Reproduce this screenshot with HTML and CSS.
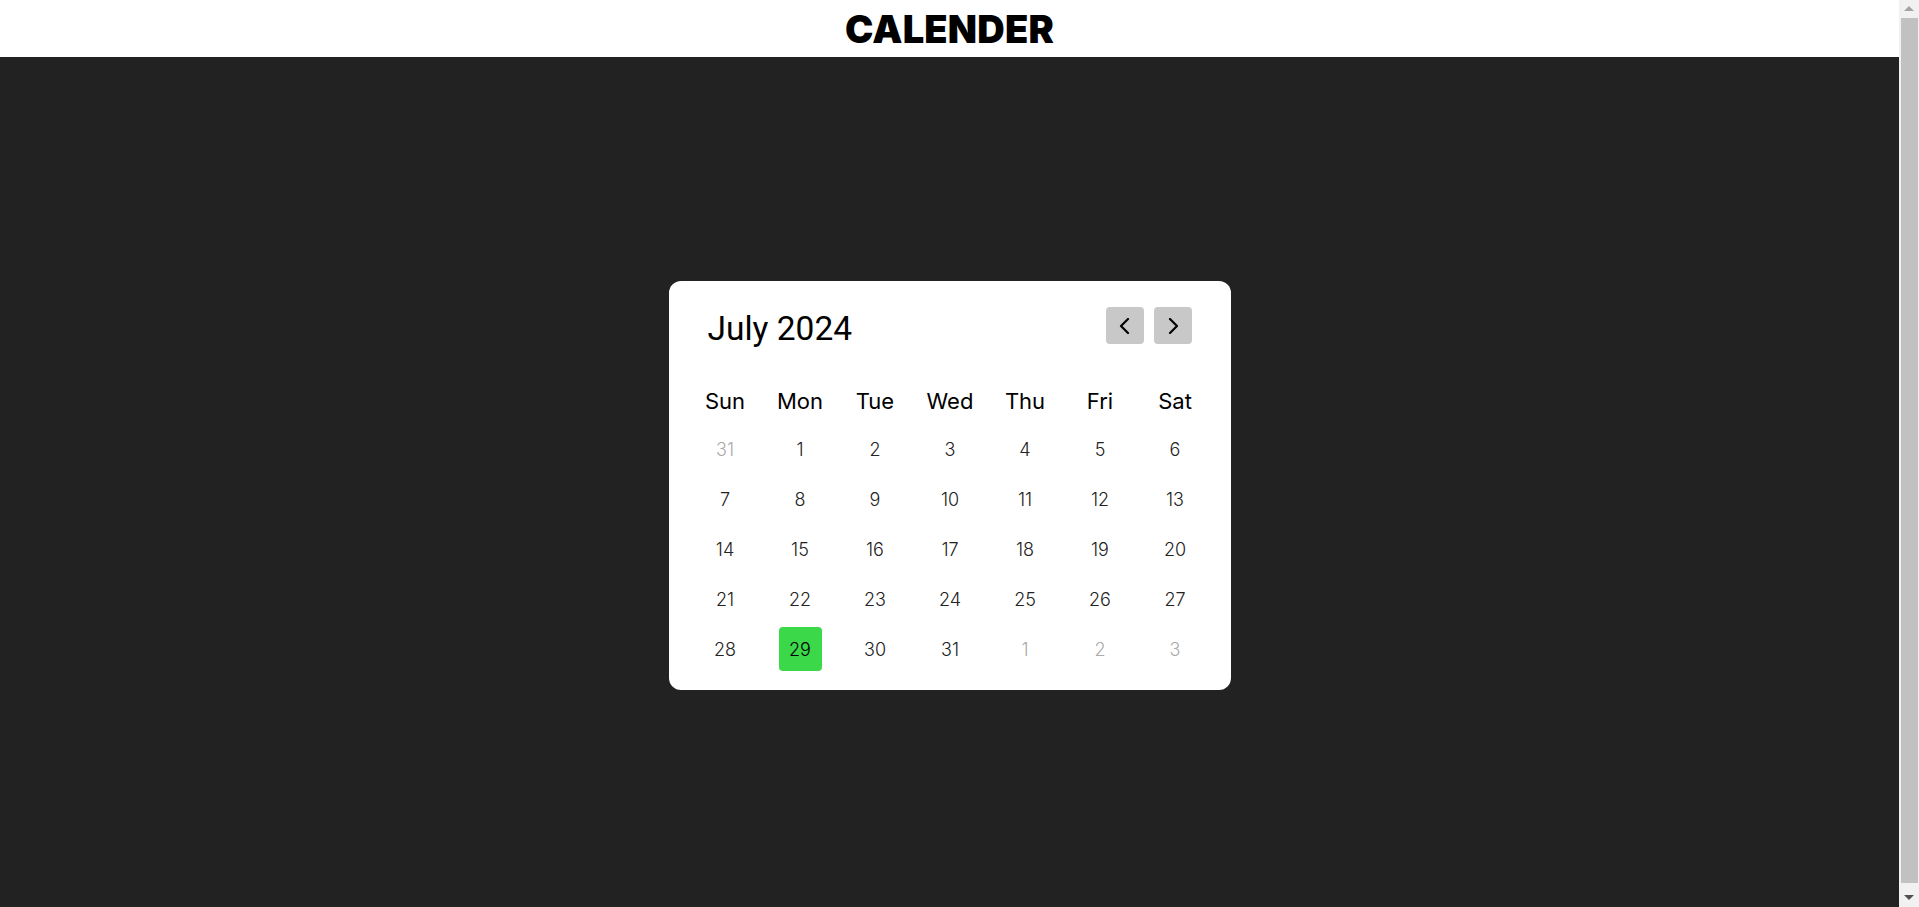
FILE: index.html
```html
<!DOCTYPE html>
<html lang="en">
<head>
<meta charset="utf-8">
<title>Calender</title>
<link rel="stylesheet" href="styles.css">
</head>
<body>
<div class="page">
  <header class="topbar">
    <h1 class="brand">CALENDER</h1>
  </header>
  <main class="stage">
    <section class="calendar">
      <div class="cal-head">
        <h2 class="month">July 2024</h2>
        <div class="nav">
          <button class="nav-btn" aria-label="Previous month">
            <svg width="12" height="16" viewBox="0 0 12 16"><polyline points="9,1 2,8 9,15" fill="none" stroke="#000" stroke-width="2.2" stroke-linecap="round" stroke-linejoin="round"/></svg>
          </button>
          <button class="nav-btn" aria-label="Next month">
            <svg width="12" height="16" viewBox="0 0 12 16"><polyline points="3,1 10,8 3,15" fill="none" stroke="#000" stroke-width="2.2" stroke-linecap="round" stroke-linejoin="round"/></svg>
          </button>
        </div>
      </div>
      <div class="weekdays">
        <span>Sun</span><span>Mon</span><span>Tue</span><span>Wed</span><span>Thu</span><span>Fri</span><span>Sat</span>
      </div>
      <div class="days">
        <span class="day muted">31</span><span class="day">1</span><span class="day">2</span><span class="day">3</span><span class="day">4</span><span class="day">5</span><span class="day">6</span>
        <span class="day">7</span><span class="day">8</span><span class="day">9</span><span class="day">10</span><span class="day">11</span><span class="day">12</span><span class="day">13</span>
        <span class="day">14</span><span class="day">15</span><span class="day">16</span><span class="day">17</span><span class="day">18</span><span class="day">19</span><span class="day">20</span>
        <span class="day">21</span><span class="day">22</span><span class="day">23</span><span class="day">24</span><span class="day">25</span><span class="day">26</span><span class="day">27</span>
        <span class="day">28</span><span class="day today">29</span><span class="day">30</span><span class="day">31</span><span class="day muted">1</span><span class="day muted">2</span><span class="day muted">3</span>
      </div>
    </section>
  </main>
</div>
<div class="scrollbar" aria-hidden="true">
  <span class="arrow-up"></span>
  <span class="thumb"></span>
  <span class="arrow-down"></span>
</div>
</body>
</html>
```
FILE: styles.css
```css
* { box-sizing: border-box; }

html, body {
  margin: 0;
  padding: 0;
}

body {
  font-family: Inter, "Noto Sans", sans-serif;
  background: #222222;
  overflow: hidden;
}

.page {
  margin-right: 20px;
}

.topbar {
  height: 57px;
  background: #ffffff;
  display: flex;
  align-items: center;
  justify-content: center;
}

.brand {
  margin: 0;
  font-family: Inter, sans-serif;
  font-weight: 900;
  font-size: 38px;
  line-height: 1;
  color: #000;
  letter-spacing: 0.2px;
}

.stage {
  background: #222222;
  height: 857px;
  display: flex;
  align-items: center;
  justify-content: center;
}

.calendar {
  width: 562px;
  background: #ffffff;
  border-radius: 12px;
  padding: 26px 19px 19px;
}

.cal-head {
  display: flex;
  align-items: center;
  justify-content: space-between;
  padding: 0 20px;
  height: 37px;
}

.month {
  margin: 0;
  font-family: Roboto, sans-serif;
  font-weight: 400;
  font-size: 33.5px;
  line-height: 1;
  color: #000;
  position: relative;
  top: 3px;
}

.nav {
  display: flex;
  gap: 10px;
}

.nav-btn {
  width: 38px;
  height: 37px;
  padding: 0;
  border: none;
  border-radius: 4px;
  background: #c8c8c8;
  display: flex;
  align-items: center;
  justify-content: center;
  cursor: pointer;
}

.weekdays {
  display: grid;
  grid-template-columns: repeat(7, 75px);
  margin-top: 42px;
  height: 30px;
}

.weekdays span {
  text-align: center;
  font-size: 22px;
  line-height: 30px;
  font-weight: 400;
  color: #000;
}

.days {
  display: grid;
  grid-template-columns: repeat(7, 75px);
  grid-auto-rows: 44px;
  row-gap: 6px;
  margin-top: 11px;
  justify-items: center;
}

.day {
  width: 43px;
  height: 44px;
  display: flex;
  align-items: center;
  justify-content: center;
  font-size: 18px;
  font-weight: 300;
  color: #222;
  border-radius: 4px;
}

.day.muted {
  color: #aaaaaa;
}

.day.today {
  background: #3bd84a;
  color: #000;
}

/* imitation of the browser scrollbar visible in the screenshot */
.scrollbar {
  position: fixed;
  top: 0;
  right: 0;
  width: 20px;
  height: 100vh;
  background: #f1f1f1;
  display: flex;
  flex-direction: column;
  align-items: center;
}

.arrow-up {
  margin-top: 6px;
  width: 0;
  height: 0;
  border-left: 5px solid transparent;
  border-right: 5px solid transparent;
  border-bottom: 5px solid #a3a3a3;
}

.thumb {
  margin-top: 7px;
  width: 17px;
  height: 865px;
  background: #c1c1c1;
}

.arrow-down {
  margin-top: 12px;
  width: 0;
  height: 0;
  border-left: 5px solid transparent;
  border-right: 5px solid transparent;
  border-top: 5px solid #505050;
}
```
